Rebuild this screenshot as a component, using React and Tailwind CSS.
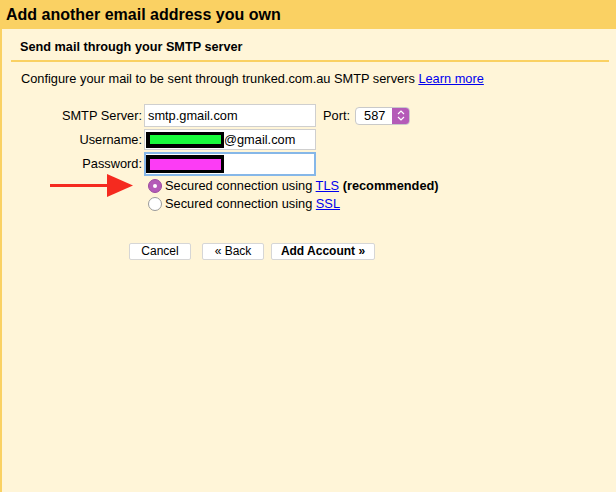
import React from "react";

const Arrow = () => (
  <svg width="84" height="26" viewBox="0 0 84 26">
    <rect x="0" y="11" width="60" height="3" fill="#f52a1f" />
    <polygon points="57,1 83,12.5 57,24" fill="#f52a1f" />
  </svg>
);

const Radio = ({ checked }) =>
  checked ? (
    <span className="w-[14px] h-[14px] rounded-full bg-[#b45bb8] border border-[#9b4aa0] flex items-center justify-center">
      <span className="w-[4px] h-[4px] rounded-full bg-white" />
    </span>
  ) : (
    <span className="w-[14px] h-[14px] rounded-full bg-white border border-[#9a9a9a]" />
  );

export default function App() {
  return (
    <div className="w-[616px] h-[492px] bg-[#fff5d8] border-l-2 border-[#fad163] font-['Liberation_Sans',Arial,sans-serif] text-black overflow-hidden">
      <div className="h-[29px] bg-[#fad163] pl-[4px] flex items-center text-[16px] font-bold">
        Add another email address you own
      </div>

      <div className="ml-[9px] mr-[7px] mt-[6px] h-[27px] border-b-2 border-[#fad163] pl-[9px] flex items-center text-[12.7px] font-bold">
        Send mail through your SMTP server
      </div>

      <div className="pl-[19px] mt-[9px] text-[12.8px] leading-[16px]">
        Configure your mail to be sent through trunked.com.au SMTP servers{" "}
        <a href="#" className="text-[#0000ee] underline">Learn more</a>
      </div>

      <div className="mt-[17px] grid grid-cols-[142px_auto] gap-y-[2px] text-[12.8px] items-center">
        <div className="text-right pr-[2px]">SMTP Server:</div>
        <div className="flex items-center">
          <div className="w-[172px] h-[23px] bg-white border border-[#cfcfcf] flex items-center pl-[3px]">smtp.gmail.com</div>
          <span className="ml-[7px]">Port:</span>
          <div className="ml-[5px] w-[55px] h-[18px] bg-white border border-[#c9c9c9] rounded-[4px] flex overflow-hidden">
            <span className="flex-1 pl-[8px] leading-[16px]">587</span>
            <span className="w-[17px] bg-[#b45bb8] flex flex-col items-center justify-center text-white">
              <svg width="8" height="11" viewBox="0 0 8 11">
                <path d="M1 4 L4 1 L7 4 M1 7 L4 10 L7 7" stroke="white" strokeWidth="1.2" fill="none" />
              </svg>
            </span>
          </div>
        </div>

        <div className="text-right pr-[2px]">Username:</div>
        <div className="w-[172px] h-[21px] bg-white border border-[#cfcfcf] flex items-center pl-[1px]">
          <div className="w-[78px] h-[16px] bg-black flex items-center justify-center">
            <div className="w-[71px] h-[9px] bg-[#18fb3b]" />
          </div>
          <span>@gmail.com</span>
        </div>

        <div className="text-right pr-[2px]">Password:</div>
        <div className="w-[172px] h-[24px] bg-white border-2 border-[#86b7e8] flex items-center pl-[0px]">
          <div className="w-[78px] h-[18px] bg-black flex items-center justify-center">
            <div className="w-[71px] h-[11px] bg-[#fc3cf5]" />
          </div>
        </div>
      </div>

      <div className="mt-[2px] grid grid-cols-[146px_auto] gap-y-[2px] text-[12.8px] items-center">
        <div className="flex justify-end pr-[14px] h-[16px] items-center">
          <Arrow />
        </div>
        <div className="flex items-center gap-[3px] h-[16px]">
          <Radio checked />
          <span>
            Secured connection using <a href="#" className="text-[#0000ee] underline">TLS</a>{" "}
            <b>(recommended)</b>
          </span>
        </div>
        <div />
        <div className="flex items-center gap-[3px] h-[16px]">
          <Radio />
          <span>
            Secured connection using <a href="#" className="text-[#0000ee] underline">SSL</a>
          </span>
        </div>
      </div>

      <div className="mt-[31px] ml-[127px] flex gap-[9px] text-[12px]">
        <button className="w-[62px] h-[17px] bg-white border border-[#d6d6d6] rounded-[2px] leading-[15px]">Cancel</button>
        <button className="ml-[2px] w-[62px] h-[17px] bg-white border border-[#d6d6d6] rounded-[2px] leading-[15px]">« Back</button>
        <button className="-ml-[2px] w-[104px] h-[17px] bg-white border border-[#d6d6d6] rounded-[2px] leading-[15px] font-bold">Add Account »</button>
      </div>
    </div>
  );
}
